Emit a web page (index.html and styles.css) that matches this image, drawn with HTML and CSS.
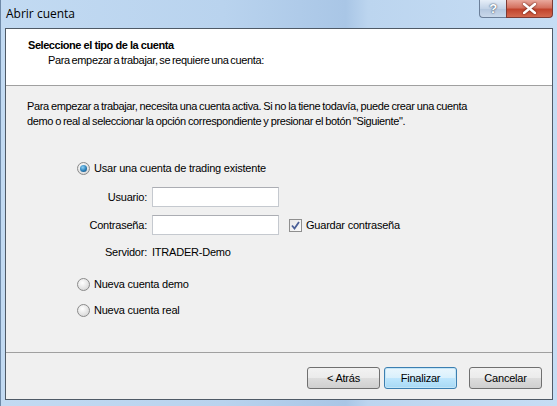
FILE: index.html
```html
<!DOCTYPE html>
<html lang="es">
  <head>
    <meta charset="UTF-8" />
    <title>Abrir cuenta</title>
    <link rel="stylesheet" href="styles.css">
  </head>
  <body>
    <div class="window">
      <div class="titlebar">
        <span class="title">Abrir cuenta</span>
        <div class="caption-buttons">
          <div class="cap-btn help">?</div>
          <div class="cap-btn close">
            <svg width="13" height="11" viewBox="0 0 13 11">
              <path d="M1 1 L12 10 M12 1 L1 10" stroke="#fff" stroke-width="2.6" stroke-linecap="square" />
            </svg>
          </div>
        </div>
      </div>

      <div class="client">
        <div class="header">
          <h1>Seleccione el tipo de la cuenta</h1>
          <p>Para empezar a trabajar, se requiere una cuenta:</p>
        </div>

        <div class="content">
          <p class="intro">
            Para empezar a trabajar, necesita una cuenta activa. Si no la tiene todavía, puede crear una cuenta<br />
            demo o real al seleccionar la opción correspondiente y presionar el botón "Siguiente".
          </p>

          <div class="options">
            <label class="radio-row">
              <span class="radio checked"></span>
              Usar una cuenta de trading existente
            </label>

            <div class="form">
              <div class="form-row">
                <span class="form-label">Usuario:</span>
                <div class="textbox"></div>
              </div>
              <div class="form-row">
                <span class="form-label">Contraseña:</span>
                <div class="textbox"></div>
                <label class="check-row">
                  <span class="checkbox">
                    <svg width="9" height="9" viewBox="0 0 9 9">
                      <path d="M1 4.5 L3.5 7.5 L8 1" stroke="#4a5f97" stroke-width="1.8" fill="none" />
                    </svg>
                  </span>
                  Guardar contraseña
                </label>
              </div>
              <div class="form-row server">
                <span class="form-label">Servidor:</span>
                <span class="server-name">ITRADER-Demo</span>
              </div>
            </div>

            <label class="radio-row demo">
              <span class="radio"></span>
              Nueva cuenta demo
            </label>
            <label class="radio-row real">
              <span class="radio"></span>
              Nueva cuenta real
            </label>
          </div>
        </div>

        <div class="footer">
          <div class="button">&lt; Atrás</div>
          <div class="button default">Finalizar</div>
          <div class="button cancel">Cancelar</div>
        </div>
      </div>
    </div>
  </body>
</html>
```

FILE: styles.css
```css
body {
  margin: 0;
  padding: 0;
  font-family: "Liberation Sans", Arial, sans-serif;
  font-size: 11px;
  letter-spacing: -0.22px;
  color: #000;
}
.window {
  width: 557px;
  height: 406px;
  display: flex;
  flex-direction: column;
  box-sizing: border-box;
  background: linear-gradient(90deg, #c2daf2 0%, #b9d3ee 40%, #a9c6e6 62%, #bcd5ef 66%, #c6ddf4 100%);
  border-left: 1px solid #6f8aa8;
}
.titlebar {
  height: 28px;
  display: flex;
  justify-content: space-between;
  flex-shrink: 0;
}
.title {
  font-family: "Open Sans", "Liberation Sans", sans-serif;
  font-size: 12px;
  letter-spacing: 0;
  padding-left: 5px;
  line-height: 27px;
  color: #000;
}
.caption-buttons {
  display: flex;
  margin-right: 4px;
  height: 18px;
}
.cap-btn {
  height: 18px;
  box-sizing: border-box;
  border: 1px solid #6b7f99;
  border-top: none;
  display: flex;
  align-items: center;
  justify-content: center;
}
.help {
  width: 27px;
  border-radius: 0 0 0 4px;
  border-right: none;
  background: linear-gradient(#e6eef8, #c3d3e7 50%, #b3c6de 51%, #c9d8ea);
  color: #fff;
  font-weight: bold;
  font-size: 13px;
  text-shadow: 0 0 2px #44546b, 0 0 1px #44546b;
}
.close {
  width: 47px;
  border-radius: 0 0 4px 0;
  border-color: #7d3a33;
  background: linear-gradient(#e9a99d, #d4715f 45%, #c1432c 55%, #d4694f);
}
.close svg {
  filter: drop-shadow(0 0 1px #5a1a10);
}
.client {
  flex: 1;
  margin: 0 4px 6px 4px;
  border: 1px solid #4f5a66;
  background-color: #f0f0f0;
  display: flex;
  flex-direction: column;
}
.header {
  background-color: #fff;
  height: 57px;
  border-bottom: 1px solid #a0a0a0;
  box-sizing: border-box;
  padding: 9px 0 0 22px;
}
.header h1 {
  margin: 0;
  font-size: 11px;
  font-weight: bold;
  letter-spacing: -0.45px;
  line-height: 14px;
}
.header p {
  margin: 2px 0 0 20px;
  line-height: 13px;
  letter-spacing: -0.35px;
  word-spacing: -1px;
}
.content {
  flex: 1;
  padding: 13px 0 0 21px;
}
.intro {
  margin: 0;
  line-height: 15px;
  white-space: nowrap;
  letter-spacing: -0.38px;
  word-spacing: -0.5px;
}
.options {
  margin: 31px 0 0 50px;
}
.radio-row {
  display: flex;
  align-items: center;
  height: 16px;
}
.radio {
  width: 11px;
  height: 11px;
  border-radius: 50%;
  border: 1px solid #8a8a8a;
  background: radial-gradient(circle at 40% 35%, #fff, #e2e2e2 60%, #cfcfcf);
  margin-right: 4px;
  position: relative;
}
.radio.checked::after {
  content: "";
  position: absolute;
  left: 2px;
  top: 2px;
  width: 7px;
  height: 7px;
  border-radius: 50%;
  background: radial-gradient(circle at 40% 35%, #8fd1f5, #2b7fb8 55%, #0d3e6a);
}
.form {
  margin-top: 11px;
}
.form-row {
  display: flex;
  align-items: center;
  height: 20px;
  margin-bottom: 8px;
}
.form-label {
  width: 70px;
  text-align: right;
  margin-right: 5px;
}
.textbox {
  width: 125px;
  height: 18px;
  background-color: #fff;
  border: 1px solid #c5c9cf;
  border-top-color: #abadb3;
}
.check-row {
  display: flex;
  align-items: center;
  margin-left: 10px;
}
.checkbox {
  width: 11px;
  height: 11px;
  border: 1px solid #8f8f8f;
  background: linear-gradient(135deg, #e8e8e8, #fafafa);
  margin-right: 4px;
  display: flex;
  align-items: center;
  justify-content: center;
}
.server {
  margin-top: -1px;
}
.demo {
  margin-top: 14px;
}
.real {
  margin-top: 10px;
}
.footer {
  height: 47px;
  border-top: 1px solid #a0a0a0;
  box-sizing: border-box;
  display: flex;
  justify-content: flex-end;
  align-items: flex-start;
  padding: 14px 10px 0 0;
}
.button {
  width: 71px;
  height: 20px;
  box-sizing: content-box;
  border: 1px solid #707070;
  border-radius: 3px;
  background: linear-gradient(#f2f2f2, #ebebeb 50%, #dddddd 51%, #cfcfcf);
  display: flex;
  align-items: center;
  justify-content: center;
  margin-left: 4px;
}
.button.default {
  border-color: #3c7fb1;
  background: linear-gradient(#eaf6fd, #d9f0fc 50%, #bee6fd 51%, #a7d9f5);
  box-shadow: inset 0 0 0 1px #c4e5f6;
}
.button.cancel {
  margin-left: 12px;
}
```
